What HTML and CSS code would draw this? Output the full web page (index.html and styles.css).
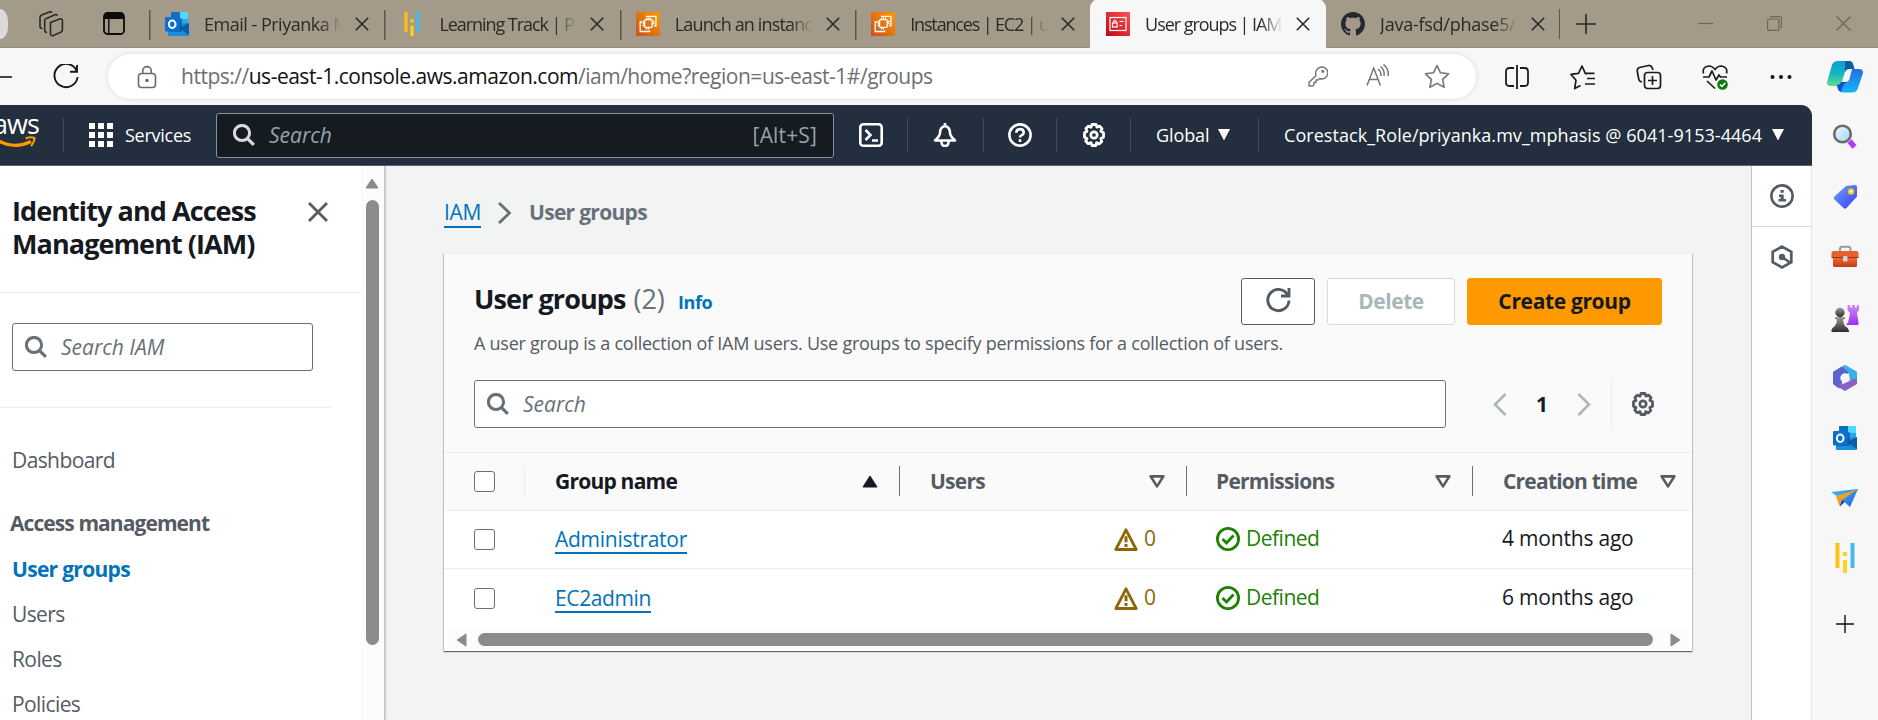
FILE: index.html
```html
<!DOCTYPE html>
<html lang="en">
<head>
<meta charset="utf-8">
<title>User groups | IAM</title>
<link rel="stylesheet" href="styles.css">
</head>
<body>
<svg class="defs" width="0" height="0">
  <defs>
    <linearGradient id="gOrange" x1="0" y1="1" x2="1" y2="0"><stop offset="0" stop-color="#c8511b"/><stop offset="1" stop-color="#ff9900"/></linearGradient>
    <linearGradient id="gRed" x1="0" y1="1" x2="1" y2="0"><stop offset="0" stop-color="#bd0816"/><stop offset="1" stop-color="#ff5252"/></linearGradient>
    <linearGradient id="gCopA" x1="0" y1="0" x2="0" y2="1"><stop offset="0" stop-color="#0a9bd8"/><stop offset=".5" stop-color="#16b4c4"/><stop offset="1" stop-color="#5fe08c"/></linearGradient>
    <linearGradient id="gCopB" x1="0" y1="0" x2="0" y2="1"><stop offset="0" stop-color="#2270e0"/><stop offset="1" stop-color="#12b5f8"/></linearGradient>
    <linearGradient id="gTag" x1="0" y1="0" x2="1" y2="1"><stop offset="0" stop-color="#6aa5ff"/><stop offset="1" stop-color="#3b3cf0"/></linearGradient>
    <linearGradient id="gPurple" x1="0" y1="0" x2="0" y2="1"><stop offset="0" stop-color="#d08cf5"/><stop offset="1" stop-color="#a02cf5"/></linearGradient>
    <linearGradient id="gPawn" x1="0" y1="0" x2="0" y2="1"><stop offset="0" stop-color="#9a9a9a"/><stop offset="1" stop-color="#2b2b2b"/></linearGradient>
    <linearGradient id="gBox" x1="0" y1="0" x2="0" y2="1"><stop offset="0" stop-color="#f0703a"/><stop offset="1" stop-color="#c33a10"/></linearGradient>
    <linearGradient id="gLens" x1="0" y1="0" x2="1" y2="1"><stop offset="0" stop-color="#f2faff"/><stop offset="1" stop-color="#9fd3fb"/></linearGradient>
    <linearGradient id="gPlane" x1="0" y1="0" x2="1" y2="1"><stop offset="0" stop-color="#49c0f5"/><stop offset="1" stop-color="#1d5fe8"/></linearGradient>
    <symbol id="search" viewBox="0 0 22 22"><circle cx="9" cy="9" r="7.6" fill="none" stroke="currentColor" stroke-width="3"/><path d="M14.3 14.3L20.8 20.8" stroke="currentColor" stroke-width="3.2"/></symbol>
    <symbol id="x" viewBox="0 0 14 14"><path d="M.8.8L13.2 13.2M13.2.8L.8 13.2" stroke="currentColor" stroke-width="1.6" fill="none"/></symbol>
    <symbol id="gear" viewBox="0 0 24 24"><path d="M10 1.5h4l.9 2.6 2.8-1 2.3 2.5-1.2 2.7 2.7 1.4v4.6l-2.7 1.3 1 2.8-2.6 2.5-2.6-1.3L14 22.5h-4l-1-2.9-2.8 1.1-2.5-2.6 1.3-2.6-2.5-1.3V9.7L5 8.4 3.9 5.6 6.3 3.2 9 4.3z" fill="none" stroke="currentColor" stroke-width="2.8" stroke-linejoin="round"/><circle cx="12" cy="12" r="3.2" fill="none" stroke="currentColor" stroke-width="2.7"/></symbol>
    <symbol id="outlook" viewBox="0 0 24 24"><rect x="6" y="0" width="17" height="20" rx="1" fill="#28a8ea"/><path d="M6 1a1 1 0 011-1h8v7H6z" fill="#0f6fc0"/><path d="M15 0h7a1 1 0 011 1v6h-8z" fill="#50d9ff"/><path d="M3 13l21-2v12a1 1 0 01-1 1H4a1 1 0 01-1-1z" fill="#1490df"/><path d="M24 11v12L14 16z" fill="#0b5ba5"/><rect x="4" y="6" width="13" height="14" rx="1" fill="#084a86" opacity=".6"/><rect x="0" y="5" width="14.5" height="14.5" rx="1.2" fill="#0a6fd0"/><ellipse cx="7.2" cy="12.2" rx="3.3" ry="3.7" fill="none" stroke="#fff" stroke-width="2"/></symbol>
    <symbol id="ec2" viewBox="0 0 24 24"><rect width="24" height="24" fill="url(#gOrange)"/><g fill="none" stroke="#fff" stroke-width="1.3"><rect x="8.6" y="7.6" width="7.6" height="7.8" rx="1"/><path d="M10.5 7V5.5M12.5 7V5.5M14.5 7V5.5M10.5 16v1.5M12.5 16v1.5M8 9.5H6.5M8 11.5H6.5M8 13.5H6.5M17 9.5h1.5M17 11.5h1.5M10 4.3h10v9.5h-2M6 10H4.200v9.500h9.500V18.500"/></g></symbol>
    <symbol id="bars" viewBox="0 0 20 30"><path d="M.5 0h4v25h-4z" fill="#fcc010"/><path d="M8 9h4v4H8zM8 17h4v13H8z" fill="#ffd21a"/><path d="M15.500 0h4v25h-4z" fill="#45b8ee"/></symbol>
    <symbol id="tri" viewBox="0 0 16 13"><path d="M1.600 1.400h12.800L8 11.400z" fill="none" stroke="currentColor" stroke-width="2.600" stroke-linejoin="round"/></symbol>
    <symbol id="warn" viewBox="0 0 24 24"><path d="M12 2.800L22.200 22.500H1.800z" fill="none" stroke="#8d6605" stroke-width="2.800" stroke-linejoin="round"/><path d="M12 9.200v6M12 17v3" stroke="#8d6605" stroke-width="3"/></symbol>
    <symbol id="ok" viewBox="0 0 24 24"><circle cx="12" cy="12" r="10.600" fill="none" stroke="#1d8102" stroke-width="2.800"/><path d="M6.500 12l4 4 7-7.500" fill="none" stroke="#1d8102" stroke-width="2.800"/></symbol>
  </defs>
</svg>

<header class="tabstrip">
  <span class="avatar"></span>
  <svg class="ws" viewBox="0 0 26 26" fill="none" stroke="#2d2a26" stroke-width="1.600"><path d="M12.500 11.500l9-3.600q2.500-.6 2.900 1.600v9.500q0 1.600-1.600 2.300l-7.500 3.300q-2.200.6-2.800-1.500z"/><path d="M9 21.500q-2.300 0-2.300-2.200V10q0-1.800 1.600-2.600L17 3.700q1.700-.5 2.500.8M4.500 17.500Q2 17.600 2 15V6.500Q2 4.800 3.700 4L11.500 1q1.600-.4 2.400.8"/></svg>
  <svg class="vt" viewBox="0 0 22 23"><rect x="1" y="1" width="20" height="21" rx="3.500" fill="none" stroke="#0c0b0a" stroke-width="1.800"/><path d="M1 7V4q0-3 3-3h14q3 0 3 3v3z" fill="#0c0b0a"/><path d="M5.800 7v15" stroke="#0c0b0a" stroke-width="1.400"/></svg>
  <div class="tab t1"><svg class="fav"><use href="#outlook"/></svg><span class="title">Email - Priyanka M</span><svg class="close"><use href="#x"/></svg></div>
  <div class="tab t2"><svg class="fav bars"><use href="#bars"/></svg><span class="title">Learning Track | P</span><svg class="close"><use href="#x"/></svg></div>
  <div class="tab t3"><svg class="fav"><use href="#ec2"/></svg><span class="title">Launch an instanc</span><svg class="close"><use href="#x"/></svg></div>
  <div class="tab t4"><svg class="fav"><use href="#ec2"/></svg><span class="title">Instances | EC2 | u</span><svg class="close"><use href="#x"/></svg></div>
  <div class="tab active"><svg class="fav" viewBox="0 0 24 24"><rect width="24" height="24" fill="url(#gRed)"/><rect x="4" y="5.500" width="16" height="13" fill="none" stroke="#fff" stroke-width="1.200"/><rect x="6.500" y="11" width="4.600" height="4" fill="none" stroke="#fff" stroke-width="1.200"/><path d="M7.500 11V9.500q1.300-2.200 2.600 0V11M13.500 9.500h4M13.500 13.500h2.500" stroke="#fff" stroke-width="1.200" fill="none"/></svg><span class="title">User groups | IAM</span><svg class="close"><use href="#x"/></svg></div>
  <div class="tab t6"><svg class="fav" viewBox="0 0 16 16"><path fill="#24292f" d="M8 0C3.580 0 0 3.580 0 8c0 3.540 2.290 6.530 5.470 7.590.4.070.55-.17.55-.38 0-.19-.010-.82-.010-1.490-2.010.37-2.530-.49-2.690-.94-.090-.23-.48-.94-.82-1.130-.28-.15-.68-.52-.010-.53.63-.010 1.080.58 1.230.82.72 1.210 1.870.87 2.330.66.070-.52.28-.87.51-1.070-1.780-.2-3.640-.89-3.640-3.950 0-.87.31-1.590.82-2.150-.080-.2-.36-1.020.080-2.120 0 0 .67-.21 2.200.82.640-.18 1.320-.27 2-.27s1.360.090 2 .27c1.530-1.040 2.200-.82 2.200-.82.44 1.100.16 1.920.080 2.120.51.560.82 1.270.82 2.150 0 3.070-1.870 3.750-3.650 3.950.29.250.540.730.540 1.480 0 1.070-.010 1.930-.010 2.200 0 .210.150.460.550.380A8.010 8.010 0 0016 8c0-4.420-3.580-8-8-8z"/></svg><span class="title">Java-fsd/phase5/</span><svg class="close"><use href="#x"/></svg></div>
  <svg class="plus" viewBox="0 0 20 20"><path d="M10 0v20M0 10h20" stroke="#2b2823" stroke-width="1.600"/></svg>
  <div class="winctl">
    <svg width="15" height="15"><path d="M0 7.500h15" stroke="#6b6459" stroke-width="1.200"/></svg>
    <svg width="15" height="15" viewBox="0 0 15 15" fill="none" stroke="#6b6459" stroke-width="1.200"><rect x=".6" y="3" width="11.400" height="11.400" rx="1.500"/><path d="M3 1.200q.5-.6 1.500-.6h8q2 0 2 2v8q0 1-.6 1.500"/></svg>
    <svg width="15" height="15" viewBox="0 0 15 15"><path d="M.5.5l14 14M14.500.5l-14 14" stroke="#6b6459" stroke-width="1.200"/></svg>
  </div>
</header>

<div class="toolbar">
  <svg class="back" width="14" height="20"><path d="M0 10h12" stroke="#1a1a1a" stroke-width="1.600"/></svg>
  <svg class="reload" viewBox="0 0 26 26" fill="none" stroke="#161616" stroke-width="1.900"><path d="M23.600 6.600A11.600 11.600 0 1024.600 13M24 1v6.800h-7"/></svg>
  <div class="address">
    <svg class="lock" viewBox="0 0 20 24" fill="none" stroke="#6b6b6b" stroke-width="1.600"><rect x="1.500" y="8.500" width="17" height="14" rx="3"/><path d="M5.800 8.500V5.800a4.200 4.200 0 018.400 0v2.700"/><circle cx="10" cy="15.500" r="1" fill="#6b6b6b"/></svg>
    <span class="url">https://<b>us-east-1.console.aws.amazon.com</b>/iam/home?region=us-east-1#/groups</span>
    <svg class="key" viewBox="0 0 20 21" fill="none" stroke="#757575" stroke-width="1.400"><path d="M13 1a6 6 0 11-1.500 11.500L10 14H8v2.500H6V19l-1.200 1H1v-3.600l7-6.800A6.500 6.500 0 0113 1z"/><circle cx="14.800" cy="5.300" r=".9" fill="#757575"/></svg>
    <svg class="aloud" viewBox="0 0 23 22" fill="none" stroke="#757575" stroke-width="1.500"><path d="M1 21.500L7.700 4l6.700 17.500M3.500 15.500h8.400M12 5q3.500 2.500 2.800 7M14.500 2.500q4.500 4 3.500 9.500M17.500.5q6 5 4.400 11.500"/></svg>
    <svg class="star" viewBox="0 0 26 25" fill="none" stroke="#757575" stroke-width="1.600" stroke-linejoin="round"><path d="M13 1.500l3.500 7.300 8 1-5.900 5.500 1.500 8L13 19.400l-7.100 3.900 1.500-8L1.500 9.800l8-1z"/></svg>
  </div>
  <div class="tools">
    <svg viewBox="0 0 26 26" fill="none" stroke="#1b1b1b" stroke-width="1.800"><path d="M10 4H5.500Q2 4 2 7.500v11Q2 22 5.500 22H10M16 4h4.500Q24 4 24 7.500v11q0 3.500-3.500 3.500H16M13 1v24"/></svg>
    <svg viewBox="0 0 26 26" fill="none" stroke="#1b1b1b" stroke-width="1.700" stroke-linejoin="round"><path d="M10.500 21.500l-5.800 3 1.300-8.300L1 10.400l7.500-1L12 2l3.300 7.400h9.200M17 14.500h8M15 20h10M15.300 9.400L17 10"/></svg>
    <svg viewBox="0 0 26 26" fill="none" stroke="#1b1b1b" stroke-width="1.700"><path d="M6 18q-3-.6-3.300-3L1.200 7Q1 4.500 3.500 3.500l9-2q2.500-.3 3.700 2.200L17 6"/><rect x="8.500" y="8.500" width="16" height="16" rx="3"/><path d="M16.500 12v9M12 16.500h9"/></svg>
    <svg viewBox="0 0 26 26" fill="none" stroke="#1b1b1b" stroke-width="1.700" stroke-linejoin="round"><path d="M1.500 9.500Q0 3 6.500 2q4 0 6.500 3.500Q15.500 2 19.500 2 26 3 24.500 9.500M1 13h6l3-6 4 9 3-5 1.500 2H25M5 17l8 7.500"/><circle cx="20.500" cy="20.500" r="5.300" fill="#0f7b0f" stroke="none"/><path d="M18 20.500l2 2 3.300-3.800" stroke="#fff" stroke-width="1.500"/></svg>
    <svg viewBox="0 0 26 26" fill="#111"><circle cx="4.500" cy="13" r="2"/><circle cx="13" cy="13" r="2"/><circle cx="21.500" cy="13" r="2"/></svg>
  </div>
  <svg class="copilot" viewBox="0 0 36 33"><path d="M11 1h11q3 0 4 3l1.500 5H22q-3 0-4 3l-3.500 11q-1 3-4 3H4q-5 0-3.600-5L5 5q1.500-4 6-4z" fill="url(#gCopA)"/><path d="M18 1h4q3 0 4 3l1.500 5H22q-3 0-4 3z" fill="#0b5f9e"/><path d="M25.500 9H32q5 0 3.700 5L31 28q-1.500 4.500-6 4.500H15q-3-.5-4-3.500l-1-4q3-.5 4.500-3h4q3 0 4-3l2-8q.3-1.500 1-2z" fill="url(#gCopB)"/><path d="M10 25.500q3-.5 4.500-3.500h5q-3 2-4 5l-1.500 5q-2.500-1-3-3z" fill="#1c49d6"/></svg>
</div>

<div class="browserbody">
  <div class="page">
    <nav class="awsbar">
      <div class="logo"><span>aws</span><svg viewBox="0 0 41 13"><path d="M0 4q17 10 34 1.500" fill="none" stroke="#ff9900" stroke-width="3.200"/><path d="M28.500 2.500q5.500-2 9-.5 0 4-3.500 8" fill="none" stroke="#ff9900" stroke-width="2"/></svg></div>
      <div class="services"><svg width="24" height="24" fill="#fff"><path d="M0 0h6v6H0zM9 0h6v6H9zM18 0h6v6h-6zM0 9h6v6H0zM9 9h6v6H9zM18 9h6v6h-6zM0 18h6v6H0zM9 18h6v6H9zM18 18h6v6h-6z"/></svg><span>Services</span></div>
      <div class="awssearch"><svg><use href="#search"/></svg><i>Search</i><span>[Alt+S]</span></div>
      <div class="cell c1"><svg viewBox="0 0 24 24" fill="none" stroke="#fff" stroke-width="2.600"><rect x="1.300" y="1.300" width="21.400" height="21.400" rx="3"/><path d="M6.500 7l5 5-5 5M13 17.500h6"/></svg></div>
      <div class="cell c2"><svg viewBox="0 0 24 24" fill="none" stroke="#fff" stroke-width="2.600" stroke-linejoin="round"><path d="M12 3q-5 1-5 7 0 3-5 7.500h20Q17 13 17 10q0-6-5-7zM12 0v3"/><path d="M8.500 18v1.500a3.500 3.500 0 007 0V18"/></svg></div>
      <div class="cell c3"><svg viewBox="0 0 24 24" fill="none" stroke="#fff" stroke-width="2.600"><circle cx="12" cy="12" r="10.600"/><path d="M8.300 9.800q.2-3.700 3.700-3.700t3.700 3.200q0 2-1.900 2.900T12 14.500M12 16.300v2.700"/></svg></div>
      <div class="cell c4"><svg><use href="#gear"/></svg></div>
      <div class="cell global"><span>Global</span><svg width="12" height="12"><path d="M0 0h12L6 11.500z" fill="#fff"/></svg></div>
      <div class="account"><span>Corestack_Role/priyanka.mv_mphasis @ 6041-9153-4464</span><svg width="12" height="12"><path d="M0 0h12L6 11.500z" fill="#fff"/></svg></div>
    </nav>
    <div class="console">
      <aside class="sidenav">
        <div class="navcontent">
          <div class="navhead"><h2>Identity and Access<br>Management (IAM)</h2><svg viewBox="0 0 20 20"><path d="M1 1l18 18M19 1L1 19" stroke="#545b64" stroke-width="2.800"/></svg></div>
          <div class="navsearch"><svg><use href="#search"/></svg><i>Search IAM</i></div>
          <ul>
            <li class="dash">Dashboard</li>
            <li class="section">Access management</li>
            <li class="current">User groups</li>
            <li>Users</li>
            <li>Roles</li>
            <li>Policies</li>
          </ul>
        </div>
        <div class="vscroll"><svg width="14" height="11"><path d="M7 1L13 10H1z" fill="#8b8b8b" stroke="#8b8b8b" stroke-linejoin="round"/></svg><div class="thumb"></div></div>
      </aside>
      <main>
        <div class="crumbs"><a>IAM</a><svg width="13" height="22"><path d="M1 1l10.500 10L1 21" fill="none" stroke="#687078" stroke-width="2.800"/></svg><b>User groups</b></div>
        <section class="panel">
          <div class="panelhead">
            <div class="titlerow">
              <h1>User groups <span>(2)</span></h1><a class="info">Info</a>
              <div class="buttons">
                <button class="refresh"><svg viewBox="0 0 25 25" fill="none" stroke="#545b64" stroke-width="2.900"><path d="M22 7.500A10.600 10.600 0 1023 12.500M23 0v8h-8"/></svg></button>
                <button class="delete">Delete</button>
                <button class="create">Create group</button>
              </div>
            </div>
            <p>A user group is a collection of IAM users. Use groups to specify permissions for a collection of users.</p>
            <div class="filterrow">
              <div class="filter"><svg><use href="#search"/></svg><i>Search</i></div>
              <svg class="prev" width="14" height="23"><path d="M12.500 1L2 11.500 12.500 22" fill="none" stroke="#aab7b8" stroke-width="2.600"/></svg>
              <b>1</b>
              <svg class="next" width="14" height="23"><path d="M1.500 1L12 11.500 1.500 22" fill="none" stroke="#aab7b8" stroke-width="2.600"/></svg>
              <div class="prefs"><svg><use href="#gear"/></svg></div>
            </div>
          </div>
          <div class="row thead">
            <div class="chk"><span class="box"></span></div>
            <div class="name th"><b>Group name</b><svg width="16" height="13"><path d="M8 1L15 12H1z" fill="#16191f" stroke="#16191f" stroke-linejoin="round"/></svg></div>
            <div class="users th"><b>Users</b><svg width="16" height="13"><use href="#tri"/></svg></div>
            <div class="perm th"><b>Permissions</b><svg width="16" height="13"><use href="#tri"/></svg></div>
            <div class="time th"><b>Creation time</b><svg width="16" height="13"><use href="#tri"/></svg></div>
          </div>
          <div class="row r1">
            <div class="chk"><span class="box"></span></div>
            <div class="name"><a>Administrator</a></div>
            <div class="users"><svg><use href="#warn"/></svg><span>0</span></div>
            <div class="perm"><svg><use href="#ok"/></svg><span>Defined</span></div>
            <div class="time">4 months ago</div>
          </div>
          <div class="row r2">
            <div class="chk"><span class="box"></span></div>
            <div class="name"><a class="ec2">EC2admin</a></div>
            <div class="users"><svg><use href="#warn"/></svg><span>0</span></div>
            <div class="perm"><svg><use href="#ok"/></svg><span>Defined</span></div>
            <div class="time">6 months ago</div>
          </div>
          <div class="hscroll"><svg width="11" height="14"><path d="M10 1v12L1 7z" fill="#8b8b8b" stroke="#8b8b8b" stroke-linejoin="round"/></svg><div class="thumb"></div><svg width="11" height="14"><path d="M1 1v12l9-6z" fill="#8b8b8b" stroke="#8b8b8b" stroke-linejoin="round"/></svg></div>
        </section>
      </main>
      <aside class="helppane">
        <div><svg viewBox="0 0 24 24"><circle cx="12" cy="12" r="10.600" fill="none" stroke="#545b64" stroke-width="2.600"/><path d="M10.500 6h3.200v2.800h-3.200zM9 10.500h4.700V15H16v2.600H8.500V15h2v-2H9z" fill="#545b64"/></svg></div>
        <div class="hex"><svg viewBox="0 0 24 24"><path d="M12 1.600l9.300 5.200v10.400L12 22.400l-9.300-5.200V6.800z" fill="none" stroke="#545b64" stroke-width="2.700"/><circle cx="12" cy="12" r="3.200" fill="#545b64"/><path d="M12 12l8 5.500" stroke="#545b64" stroke-width="2.600"/></svg></div>
      </aside>
    </div>
  </div>
  <aside class="edgebar">
    <svg viewBox="0 0 28 28"><path d="M18.500 18l5 6" stroke="#b23cf5" stroke-width="5.500"/><circle cx="11.500" cy="11" r="8.300" fill="url(#gLens)" stroke="#6a6a6a" stroke-width="2.600"/></svg>
    <svg viewBox="0 0 28 28"><path d="M15 3l9-1q2 0 2 2v9.500L15.500 25q-1.500 1.500-3 0l-9-8.500q-1.500-1.500 0-3z" fill="url(#gTag)"/><circle cx="20" cy="8.500" r="2.300" fill="#fff" stroke="#f5c518" stroke-width="1.900"/></svg>
    <svg viewBox="0 0 28 28"><path d="M9 9V6q0-2.200 2.200-2.200h6Q19.500 3.800 19.500 6v3" fill="none" stroke="#9b9b9b" stroke-width="2"/><rect x="2" y="14" width="24" height="10" rx="1.500" fill="url(#gBox)"/><rect x=".5" y="8" width="27" height="7.500" rx="2" fill="#e8602c"/><path d="M.5 14.500h27" stroke="#a3300c"/><rect x="12" y="13" width="4.500" height="5.500" rx="1" fill="#cfd3d6"/></svg>
    <svg viewBox="0 0 28 28"><path d="M17 19l2-10-2.500-3V1h2.700v2.500h2V1h2.700v2.500h2V1H28v5l-2 3 1.500 10q.5 2-.5 2H15.500q-.5-2 1.500-2z" fill="url(#gPurple)"/><circle cx="9" cy="8.500" r="4.700" fill="url(#gPawn)"/><path d="M4 13h10v2.200h-2q.3 5 2.500 7.300Q18 24 18 28H.5Q0 24 3.500 22.500 6 20 6 15.200H4z" fill="url(#gPawn)"/></svg>
    <svg viewBox="0 0 28 28"><path d="M14 1l12 7v6L17 8.500l-6 3.300V20L2 15V8z" fill="#3f7bd8"/><path d="M14 1l12 7v12l-8-4.500V9l-8-4.500z" fill="#3bb0ea"/><path d="M2 8l9-5.500L18 9l-7 4v7l-3 4.500L2 20z" fill="#5a62cf"/><path d="M26 14v6l-12 7-6-3.500V19l4 1 8-4z" fill="#8a63c2"/><circle cx="14" cy="14" r="4.700" fill="#f5f6f7"/></svg>
    <svg viewBox="-2 -2 28 28"><use href="#outlook" width="24" height="24"/></svg>
    <svg viewBox="0 0 28 28"><path d="M0 8L27 5 19 23 13.500 18 9 22 7 13z" fill="url(#gPlane)"/><path d="M5 12L26 5.500 11 16l-2.500 6.500z" fill="#f0a31c"/><path d="M11 16l2.500 2L9 22.500z" fill="#1c3f9e"/></svg>
    <svg class="edgebars"><use href="#bars"/></svg>
    <svg class="edgeplus" viewBox="0 0 18 18"><path d="M9 0v18M0 9h18" stroke="#111" stroke-width="1.400"/></svg>
  </aside>
</div>
</body>
</html>
```
FILE: styles.css
```css
* { box-sizing: border-box; }
html, body { margin: 0; height: 720px; overflow: hidden; }
body { width: 1878px; background: #f7f7f7; color: #16191f; font-family: "Open Sans", "Noto Sans", sans-serif; font-size: 21px; display: flex; flex-direction: column; }
svg { display: block; flex: none; }
.defs { position: absolute; }
h1, h2, p, ul { margin: 0; padding: 0; }

/* Tab strip */
.tabstrip { height: 48px; flex: none; background: #a39a8a; display: flex; align-items: center; color: #2c2925; border-bottom: 1px solid #958d7f; }
.avatar { width: 8px; height: 30px; background: #dcdad6; border-radius: 0 10px 10px 0 / 0 15px 15px 0; }
.ws { width: 26px; height: 26px; margin-left: 30px; }
.vt { width: 22px; height: 23px; margin-left: 39px; }
.tab { width: 235.400px; height: 48px; flex: none; display: flex; align-items: center; padding-left: 16px; background: linear-gradient(#5c554b, #5c554b) 0 10px / 1.500px 30px no-repeat; }
.t1 { margin-left: 24px; }
.fav { width: 24px; height: 24px; }
.fav.bars { width: 16px; margin: 0 4px; }
.title { width: 139px; height: 30px; line-height: 30px; margin-left: 15px; font-size: 18px; letter-spacing: -.5px; overflow: hidden; white-space: nowrap; -webkit-mask-image: linear-gradient(90deg, #000 115px, transparent 138px); mask-image: linear-gradient(90deg, #000 115px, transparent 138px); }
.t2 .title { letter-spacing: -1.050px; }
.t3 .title { letter-spacing: -.850px; }
.t4 .title { letter-spacing: -1.150px; }
.close { width: 14px; height: 14px; margin-left: 12px; }
.tab.active { width: 236px; margin-left: -.500px; height: 49px; background: #f7f7f7; border-radius: 9px 9px 0 0; }
.active .title { letter-spacing: -1.050px; }
.t6 { background: none; width: 233px; padding-left: 15px; }
.t6 .title { letter-spacing: -.250px; }
.plus { width: 20px; height: 20px; }
.tab + .plus { box-sizing: content-box; border-left: 1.500px solid #5c554b; padding: 5px 0 5px 16px; }
.winctl { display: flex; gap: 54px; margin-left: 102px; }

/* Toolbar */
.toolbar { height: 57px; flex: none; background: #f7f7f7; display: flex; align-items: center; }
.reload { width: 26px; height: 26px; margin-left: 39px; }
.address { width: 1368px; height: 45px; margin-left: 29px; background: #fff; border-radius: 23px; box-shadow: 0 0 5px rgba(0,0,0,.12); display: flex; align-items: center; padding-left: 29px; }
.lock { width: 20px; height: 24px; }
.url { width: 1127px; margin-left: 24px; color: #6f6f6f; letter-spacing: -.490px; line-height: 30px; margin-bottom: 1px; white-space: nowrap; }
.url b { color: #111; font-weight: 400; }
.key { width: 20px; height: 21px; }
.aloud { width: 23px; height: 22px; margin: 0 0 3px 38px; }
.star { width: 26px; height: 25px; margin-left: 35px; }
.tools { display: flex; gap: 40px; margin-left: 28px; }
.tools svg { width: 26px; height: 26px; }
.copilot { width: 36px; height: 33px; margin-left: 33px; }

/* Page */
.browserbody { display: flex; flex: 1; min-height: 0; }
.page { width: 1812px; display: flex; flex-direction: column; overflow: hidden; border-top-right-radius: 11px; }
.awsbar { height: 61px; flex: none; background: #232f3e; border-bottom: 1px solid #5c6470; display: flex; align-items: center; color: #fff; font-size: 18px; font-weight: 500; white-space: nowrap; }
.logo { width: 64px; height: 34px; border-right: 1px solid #414d5c; position: relative; }
.logo span { position: absolute; left: -7px; top: -13px; font-size: 27px; line-height: 38px; letter-spacing: -1px; }
.logo svg { position: absolute; left: -3px; top: 18px; width: 41px; height: 13px; }
.services { width: 152px; padding-left: 25px; display: flex; align-items: center; gap: 12px; letter-spacing: -.250px; }
.services span, .global span, .account span { margin-top: -1px; }
.awssearch { width: 618px; height: 45px; background: #161a21; border: 1.500px solid #87919a; border-radius: 3px; display: flex; align-items: center; padding: 0 16px; font-size: 21px; color: #95a5a6; font-weight: 400; }
.awssearch svg { width: 22px; height: 22px; color: #d5dbdb; margin-right: 14px; }
.awssearch i { flex: 1; }
.awssearch span { letter-spacing: .150px; }
.cell { height: 34px; border-right: 1px solid #414d5c; display: flex; align-items: center; }
.cell > svg:only-child { width: 24px; height: 24px; }
.c1 { width: 74px; padding-left: 25px; }
.c2 { width: 76px; padding-left: 25px; }
.c3 { width: 73px; padding-left: 24px; }
.c4 { width: 74px; padding-left: 25px; }
.global { width: 128px; padding-left: 25px; }
.global span { width: 62px; letter-spacing: -.100px; }
.account { display: flex; align-items: center; padding-left: 25px; }
.account span { width: 488px; letter-spacing: .050px; }
.console { flex: 1; display: flex; min-height: 0; }

/* Side navigation */
.sidenav { width: 385px; flex: none; background: #fff; display: flex; border-right: 1px solid #bcc4c8; box-shadow: 1px 0 2px rgba(0,28,36,.15); z-index: 1; }
.navcontent { width: 361px; }
.navhead { height: 127px; border-bottom: 1px solid #eaeded; display: flex; padding: 28px 0 0 12px; }
.navhead h2 { width: 296px; font-size: 27px; line-height: 33px; letter-spacing: -.920px; }
.navhead svg { width: 20px; height: 20px; margin-top: 8px; }
.navsearch, .filter { height: 48px; background: #fff; border: 1.500px solid #687078; border-radius: 3px; display: flex; align-items: center; padding-left: 12px; color: #687078; }
.navsearch { width: 301px; margin: 30px 0 0 12px; }
.navsearch svg, .filter svg { width: 22px; height: 22px; margin-right: 14px; }
.navcontent ul { width: 331px; margin-top: 36px; padding-top: 29px; border-top: 1px solid #eaeded; list-style: none; color: #545b64; }
.navcontent li { height: 45px; line-height: 46px; padding-left: 12px; letter-spacing: -.600px; }
.navcontent .section { margin: 18px 0 1px; padding-left: 10px; font-weight: 700; letter-spacing: -.920px; }
.navcontent .current { color: #0073bb; font-weight: 700; letter-spacing: -.700px; }
.vscroll { width: 23px; background: #fcfcfc; padding: 12px 0 0 5px; }
.vscroll svg { margin-left: -1px; }
.vscroll .thumb { width: 13px; height: 445px; margin-top: 11px; background: #8b8b8b; border-radius: 7px; }

/* Main */
main { width: 1366px; flex: none; background: #f2f3f3; padding: 24px 0 0 59px; }
.crumbs { height: 45px; display: flex; align-items: center; color: #687078; }
.crumbs a { width: 37px; line-height: 28px; letter-spacing: -.300px; color: #0073bb; border-bottom: 2px solid #0073bb; margin-top: 1px; }
.crumbs svg { margin: 0 18px 0 17px; }
.crumbs b { letter-spacing: -.700px; margin-top: -1px; }
.panel { width: 1248px; height: 398px; margin-top: 18px; background: #fff; border-top: 1px solid #eaeded; box-shadow: 0 1px 1px rgba(0,28,36,.45), 1px 1px 1px rgba(0,28,36,.15), -1px 1px 1px rgba(0,28,36,.15); }
.panelhead { height: 198px; background: #fafafa; padding: 24px 30px 0; }
.titlerow { height: 47px; display: flex; }
h1 { width: 204px; font-size: 27px; line-height: 42px; letter-spacing: -.920px; white-space: nowrap; }
h1 span { font-weight: 400; color: #687078; letter-spacing: -.100px; margin-left: 2px; }
.info { font-size: 18px; line-height: 48px; font-weight: 700; color: #0073bb; letter-spacing: -.400px; width: 60px; }
.buttons { display: flex; gap: 12px; margin-left: auto; }
button { height: 47px; border-radius: 3px; background: #fff; border: 1.500px solid #545b64; padding: 0 0 2px; font: 700 21px "Open Sans", "Noto Sans", sans-serif; display: flex; align-items: center; justify-content: center; }
.refresh { width: 74px; }
.refresh svg { width: 25px; height: 25px; }
.delete { width: 128px; color: #aab7b8; border-color: #d5dbdb; letter-spacing: -.450px; }
.create { width: 195px; background: #f90; border-color: #f90; color: #16191f; letter-spacing: -.350px; }
.panelhead p { font-size: 18px; line-height: 25px; margin: 6px 0 24px; color: #545b64; letter-spacing: -.250px; }
.filterrow { display: flex; align-items: center; height: 48px; }
.filter { width: 972px; }
.prev { margin-left: 47px; }
.filterrow b { width: 12px; margin: 0 29px 0 29px; }
.prefs { height: 48px; display: flex; align-items: center; margin-left: 20px; border-left: 1px solid #eaeded; padding-left: 19px; color: #545b64; }
.prefs svg { width: 24px; height: 24px; }

/* Table */
.row { display: flex; align-items: center; border-top: 1px solid #eaeded; height: 58px; padding-bottom: 1px; }
.row > div { display: flex; align-items: center; height: 30px; }
.thead { background: #fafafa; color: #545b64; }
.r2 { height: 60px; }
.chk { width: 81px; padding-left: 30px; }
.thead .chk { border-right: 1px solid #eaeded; }
.box { width: 21px; height: 21px; border: 1.500px solid #687078; border-radius: 3px; background: #fff; }
.name { width: 375px; padding: 0 21px 0 30px; }
.users { width: 287px; padding: 0 21px 0 30px; }
.perm { width: 286px; padding: 0 21px 0 29px; }
.time { width: 219px; padding: 0 16px 0 30px; }
.th { justify-content: space-between; border-right: 1.500px solid #687078; letter-spacing: -.780px; }
.th b { margin-top: -1px; }
.th.time { border: 0; }
.th.name { color: #16191f; }
.row a { color: #0073bb; border-bottom: 2px solid #0073bb; line-height: 26px; margin-top: 1px; letter-spacing: -.270px; }
.row .ec2 { letter-spacing: -.380px; }
.row:not(.thead) .users { justify-content: flex-end; padding-right: 31px; gap: 6px; color: #8d6605; }
.users span, .perm span { margin-top: -2px; }
.users svg:not([width]), .perm svg:not([width]) { width: 24px; height: 24px; }
.row:not(.thead) .perm { color: #1d8102; gap: 6px; letter-spacing: -.500px; }
.row:not(.thead) .time { letter-spacing: -.200px; padding: 0 0 2px 29px; }
.hscroll { height: 23px; background: #fcfcfc; display: flex; align-items: center; padding-left: 12px; }
.hscroll .thumb { width: 1175px; height: 13px; margin: 0 17px 0 11px; background: #8b8b8b; border-radius: 7px; }

/* Help pane and browser sidebar */
.helppane { width: 61px; flex: none; background: #fff; border-left: 1.500px solid #bcc4c8; border-right: 1px solid #e4e4e4; }
.helppane div { height: 61px; display: flex; align-items: center; justify-content: center; border-bottom: 1px solid #d5dbdb; }
.helppane .hex { border: 0; height: 60px; }
.helppane svg { width: 24px; height: 24px; }
.edgebar { width: 66px; background: #f7f7f7; display: flex; flex-direction: column; align-items: center; padding-top: 18px; gap: 32.200px; }
.edgebar svg { width: 28px; height: 28px; }
.edgebar .edgebars { width: 20px; height: 30px; margin-top: -1px; }
.edgebar .edgeplus { width: 18px; height: 18px; margin-top: 9px; }
```
